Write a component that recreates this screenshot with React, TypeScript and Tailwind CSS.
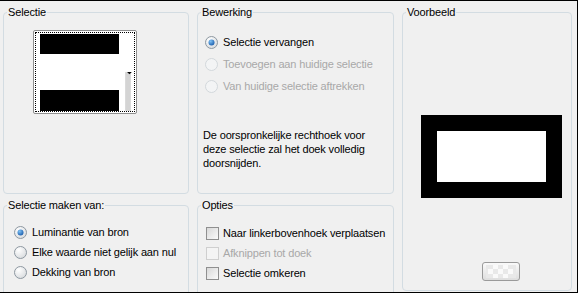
import React from "react";

const FONT = { fontFamily: '"Liberation Sans", Arial, sans-serif' };

function Radio({ checked = false, disabled = false }: { checked?: boolean; disabled?: boolean }) {
  return (
    <svg width="13" height="13" viewBox="0 0 13 13" className="shrink-0">
      <defs>
        <radialGradient id="rfill" cx="0.35" cy="0.3" r="0.8">
          <stop offset="0" stopColor="#ffffff" />
          <stop offset="1" stopColor="#d6d9dc" />
        </radialGradient>
        <radialGradient id="rdot" cx="0.35" cy="0.3" r="0.8">
          <stop offset="0" stopColor="#7fc1f4" />
          <stop offset="1" stopColor="#1457a8" />
        </radialGradient>
      </defs>
      <circle
        cx="6.5"
        cy="6.5"
        r="6"
        fill={disabled ? "#f3f4f5" : "url(#rfill)"}
        stroke={disabled ? "#d2d7db" : "#8e98a1"}
        strokeWidth="1"
      />
      {checked && <circle cx="6.5" cy="6.5" r="3" fill="url(#rdot)" />}
    </svg>
  );
}

function Check({ disabled = false }: { disabled?: boolean }) {
  return (
    <span
      className={`h-[13px] w-[13px] shrink-0 border ${
        disabled
          ? "border-[#cfcfcf] bg-[#f4f4f4]"
          : "border-[#8f8f8f] bg-gradient-to-br from-[#d8d8d8] to-[#fbfbfb]"
      }`}
    />
  );
}

function Legend({ children }: { children: React.ReactNode }) {
  return <legend className="ml-[3px] px-[1px] leading-[13px]">{children}</legend>;
}

const GROUP = "border border-[#d3dce2] rounded-[4px] min-w-0";

export default function App() {
  return (
    <div
      style={FONT}
      className="w-[578px] h-[293px] overflow-hidden bg-[#f0f0f0] border-t border-r border-b border-black text-[11px] tracking-[-0.15px] text-black"
    >
      <div className="flex pl-[3px] pt-[5px] gap-[8px]">
        {/* left column */}
        <div className="flex flex-col w-[186px] gap-[5px]">
          <fieldset className={`${GROUP} h-[188px]`}>
            <Legend>Selectie</Legend>
            <div className="ml-[29px] mt-[11px] w-[104px] h-[84px] bg-white border border-[#8e8e8e] rounded-[2px] p-px">
              <div className="h-full w-full border border-dotted border-black flex pl-[4px] pt-[1px]">
                <div className="flex flex-col w-[79px]">
                  <div className="h-[21px] bg-black" />
                  <div className="h-[36px] bg-white" />
                  <div className="h-[22px] bg-black" />
                </div>
                <div className="flex flex-col ml-[5px] w-[8px] pt-[37px]">
                  <svg width="8" height="42" viewBox="0 0 8 42">
                    <rect x="1" y="1" width="6" height="41" fill="#d4d4d4" />
                    <path d="M3 1h5L5.5 3.5z" fill="#000" />
                  </svg>
                </div>
              </div>
            </div>
          </fieldset>
          <fieldset className={`${GROUP} h-[120px]`}>
            <Legend>Selectie maken van:</Legend>
            <div className="flex flex-col pl-[10px] pt-[10px]">
              <label className="flex items-center h-[20px] gap-[5px]">
                <Radio checked />
                Luminantie van bron
              </label>
              <label className="flex items-center h-[20px] gap-[5px]">
                <Radio />
                Elke waarde niet gelijk aan nul
              </label>
              <label className="flex items-center h-[20px] gap-[5px]">
                <Radio />
                Dekking van bron
              </label>
            </div>
          </fieldset>
        </div>

        {/* middle column */}
        <div className="flex flex-col w-[197px] gap-[5px]">
          <fieldset className={`${GROUP} h-[188px]`}>
            <Legend>Bewerking</Legend>
            <div className="flex flex-col pl-[7px] pt-[12px]">
              <label className="flex items-center h-[22px] gap-[5px]">
                <Radio checked />
                Selectie vervangen
              </label>
              <label className="flex items-center h-[22px] gap-[5px] text-[#a8a8a8]">
                <Radio disabled />
                Toevoegen aan huidige selectie
              </label>
              <label className="flex items-center h-[22px] gap-[5px] text-[#a8a8a8]">
                <Radio disabled />
                Van huidige selectie aftrekken
              </label>
            </div>
            <p className="pl-[5px] mt-[31px] leading-[14px] w-[180px]">
              De oorspronkelijke rechthoek voor deze selectie zal het doek volledig doorsnijden.
            </p>
          </fieldset>
          <fieldset className={`${GROUP} h-[120px]`}>
            <Legend>Opties</Legend>
            <div className="flex flex-col pl-[8px] pt-[11px]">
              <label className="flex items-center h-[20px] gap-[4px]">
                <Check />
                Naar linkerbovenhoek verplaatsen
              </label>
              <label className="flex items-center h-[20px] gap-[4px] text-[#a8a8a8]">
                <Check disabled />
                Afknippen tot doek
              </label>
              <label className="flex items-center h-[20px] gap-[4px]">
                <Check />
                Selectie omkeren
              </label>
            </div>
          </fieldset>
        </div>

        {/* right column */}
        <fieldset className={`${GROUP} w-[170px] h-[285px]`}>
          <Legend>Voorbeeld</Legend>
          <div className="ml-[18px] mt-[96px] w-[141px] h-[83px] border-[16px] border-black bg-white" />
          <div className="ml-[79px] mt-[64px] w-[38px] h-[19px] rounded-[3px] border border-[#9a9a9a] bg-gradient-to-b from-[#fafafa] to-[#dedede] flex items-center justify-center">
            <svg width="30" height="13" viewBox="0 0 30 13">
              <rect x="0" y="0" width="30" height="13" fill="#e9e9e9" />
              <rect x="7" y="0" width="5" height="4" fill="#fafafa" />
              <rect x="17" y="0" width="5" height="4" fill="#fafafa" />
              <rect x="12" y="4" width="5" height="5" fill="#fafafa" />
              <rect x="2" y="4" width="5" height="5" fill="#fafafa" />
              <rect x="22" y="4" width="5" height="5" fill="#fafafa" />
              <rect x="7" y="9" width="5" height="4" fill="#fafafa" />
              <rect x="17" y="9" width="5" height="4" fill="#fafafa" />
            </svg>
          </div>
        </fieldset>
      </div>
    </div>
  );
}
